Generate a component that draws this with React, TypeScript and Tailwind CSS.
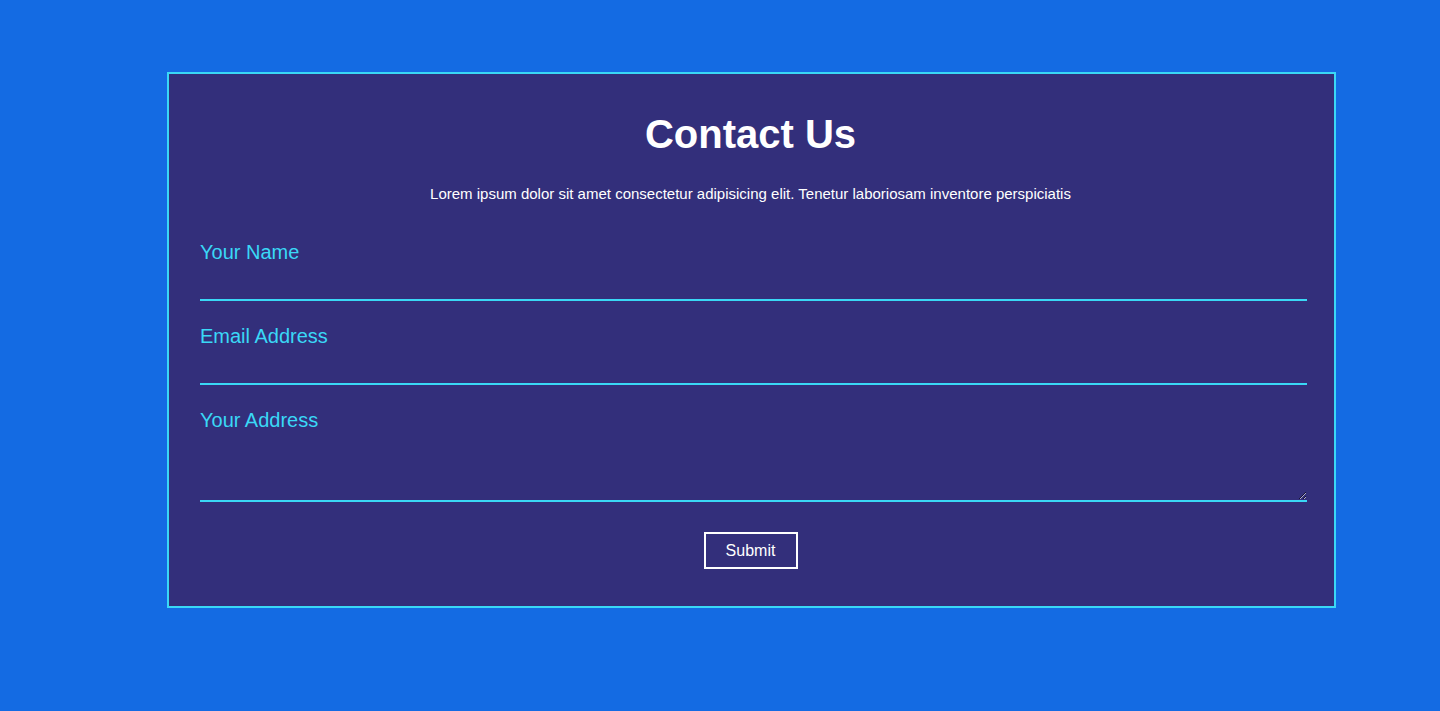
import React from "react";

export default function App() {
  return (
    <div
      className="min-h-[711px] w-full bg-[#146be3] pt-[72px]"
      style={{ fontFamily: '"Liberation Sans", Arial, sans-serif' }}
    >
      <div className="ml-[167px] w-[1169px] border-2 border-[#3ad8f6] bg-[#332f7b] pt-[37px] pb-[37px] pr-[2px]">
        <h1 className="text-center text-[40px] leading-[46px] font-bold text-white">
          Contact Us
        </h1>
        <p className="mt-[28px] text-center text-[15px] leading-[17px] text-white">
          Lorem ipsum dolor sit amet consectetur adipisicing elit. Tenetur laboriosam inventore perspiciatis
        </p>
        <form className="mt-[39px]" onSubmit={(e) => e.preventDefault()}>
          <div className="pl-[31px] pr-[25px] flex flex-col gap-[24px]">
            <div className="flex flex-col">
              <label className="block text-[20px] leading-[23px] text-[#3ad8f6]">Your Name</label>
              <input
                type="text"
                className="block h-[37px] w-full border-0 border-b-2 border-[#3ad8f6] bg-transparent text-white outline-none"
              />
            </div>
            <div className="flex flex-col">
              <label className="block text-[20px] leading-[23px] text-[#3ad8f6]">Email Address</label>
              <input
                type="email"
                className="block h-[37px] w-full border-0 border-b-2 border-[#3ad8f6] bg-transparent text-white outline-none"
              />
            </div>
            <div className="flex flex-col">
              <label className="block text-[20px] leading-[23px] text-[#3ad8f6]">Your Address</label>
              <textarea className="block h-[70px] w-full border-0 border-b-2 border-[#3ad8f6] bg-transparent text-white outline-none" />
            </div>
          </div>
          <div className="mt-[30px] flex justify-center">
            <button
              type="submit"
              className="h-[37px] w-[94px] border-2 border-white bg-transparent text-[16px] leading-[33px] text-white"
            >
              Submit
            </button>
          </div>
        </form>
      </div>
    </div>
  );
}
